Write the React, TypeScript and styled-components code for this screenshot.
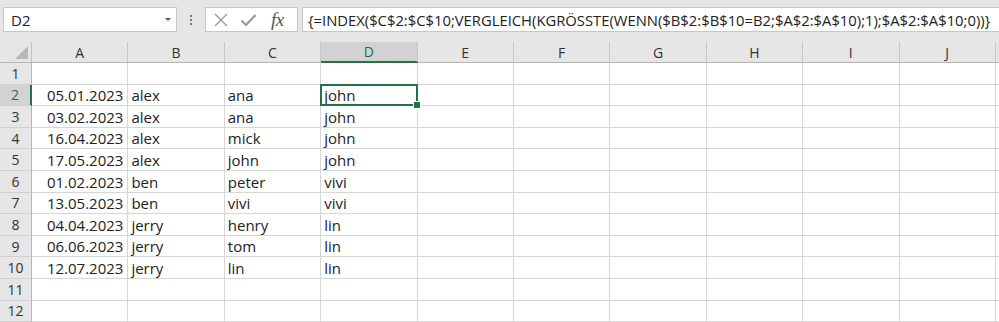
import React from "react";
import styled, { createGlobalStyle, css } from "styled-components";

const GlobalStyle = createGlobalStyle`
  html, body { margin: 0; padding: 0; background: #ffffff; }
  body { font-family: "Open Sans", "Noto Sans", sans-serif; color: #222; overflow: hidden; }
  * { box-sizing: border-box; }
`;

const GREEN = "#217346";

const Page = styled.div`
  width: 999px;
  height: 322px;
  overflow: hidden;
  display: flex;
  flex-direction: column;
`;

const Toolbar = styled.div`
  height: 42px;
  flex: none;
  background: #e6e6e6;
  display: flex;
  align-items: flex-start;
  padding: 7px 0 0 3px;
`;

const NameBox = styled.div`
  width: 174px;
  height: 25px;
  background: #fff;
  border: 1px solid #c6c6c6;
  display: flex;
  align-items: center;
  justify-content: space-between;
  padding: 0 5px 0 7px;
  font-size: 15px;
  color: #222;
`;

const Caret = styled.span`
  width: 0;
  height: 0;
  border-left: 3px solid transparent;
  border-right: 3px solid transparent;
  border-top: 3px solid #555;
`;

const Grip = styled.div`
  width: 28px;
  height: 25px;
  display: flex;
  flex-direction: column;
  align-items: center;
  justify-content: center;
  gap: 2px;
  span {
    width: 2px;
    height: 2px;
    background: #7a7a7a;
  }
`;

const IconBox = styled.div`
  width: 93px;
  height: 25px;
  background: #fff;
  border: 1px solid #c6c6c6;
  display: flex;
  align-items: center;
  padding: 0 0 0 7px;
  gap: 11px;
`;

const Fx = styled.span`
  font-family: "Liberation Serif", "DejaVu Serif", serif;
  font-style: italic;
  font-size: 19px;
  color: #555;
  margin-left: 3px;
  letter-spacing: -0.5px;
`;

const FormulaBox = styled.div`
  flex: 1;
  height: 25px;
  margin-left: 4px;
  background: #fff;
  border: 1px solid #c6c6c6;
  border-right: none;
  display: flex;
  align-items: center;
  padding-left: 5px;
  font-size: 14.8px;
  white-space: nowrap;
  overflow: hidden;
  color: #222;
`;

const Sheet = styled.div`
  display: grid;
  grid-template-columns: 32px repeat(10, 96.4px) 1fr;
  grid-template-rows: 21px repeat(12, 21.6px);
  background: #fff;
`;

const Corner = styled.div`
  background: #e6e6e6;
  border-right: 1px solid #c0c0c0;
  border-bottom: 1px solid #b5b5b5;
  position: relative;
  &::after {
    content: "";
    position: absolute;
    right: 3px;
    bottom: 3px;
    width: 0;
    height: 0;
    border-left: 13px solid transparent;
    border-bottom: 13px solid #b7b7b7;
  }
`;

const ColHead = styled.div<{ $active?: boolean }>`
  background: #e6e6e6;
  border-right: 1px solid #c6c6c6;
  border-bottom: 1px solid #b5b5b5;
  display: flex;
  align-items: center;
  justify-content: center;
  font-size: 14px;
  color: #333;
  ${(p) =>
    p.$active &&
    css`
      background: #d2d2d2;
      color: ${GREEN};
      border-bottom: 2px solid ${GREEN};
    `}
`;

const RowHead = styled.div<{ $active?: boolean }>`
  background: #e6e6e6;
  border-right: 1px solid #b5b5b5;
  border-bottom: 1px solid #d0d0d0;
  display: flex;
  align-items: center;
  justify-content: center;
  font-size: 14px;
  color: #333;
  ${(p) =>
    p.$active &&
    css`
      background: #d2d2d2;
      color: ${GREEN};
      border-right: 2px solid ${GREEN};
    `}
`;

const Cell = styled.div<{ $right?: boolean; $selected?: boolean }>`
  border-right: 1px solid #d6d6d6;
  border-bottom: 1px solid #d6d6d6;
  display: flex;
  align-items: flex-end;
  justify-content: ${(p) => (p.$right ? "flex-end" : "flex-start")};
  padding: 0 ${(p) => (p.$right ? "4px" : "0")} 0 ${(p) => (p.$right ? "0" : "3px")};
  font-size: 15px;
  color: #222;
  white-space: nowrap;
  position: relative;
  ${(p) =>
    p.$selected &&
    css`
      &::after {
        content: "";
        position: absolute;
        left: -1px;
        top: -1px;
        right: -1px;
        bottom: -1px;
        border: 2px solid ${GREEN};
        z-index: 1;
      }
      &::before {
        content: "";
        position: absolute;
        right: -4px;
        bottom: -4px;
        width: 6px;
        height: 6px;
        background: ${GREEN};
        border: 1px solid #fff;
        z-index: 2;
      }
    `}
`;

const columns = ["A", "B", "C", "D", "E", "F", "G", "H", "I", "J"];

const data: string[][] = [
  ["05.01.2023", "alex", "ana", "john"],
  ["03.02.2023", "alex", "ana", "john"],
  ["16.04.2023", "alex", "mick", "john"],
  ["17.05.2023", "alex", "john", "john"],
  ["01.02.2023", "ben", "peter", "vivi"],
  ["13.05.2023", "ben", "vivi", "vivi"],
  ["04.04.2023", "jerry", "henry", "lin"],
  ["06.06.2023", "jerry", "tom", "lin"],
  ["12.07.2023", "jerry", "lin", "lin"],
];

const formula =
  "{=INDEX($C$2:$C$10;VERGLEICH(KGRÖSSTE(WENN($B$2:$B$10=B2;$A$2:$A$10);1);$A$2:$A$10;0))}";

export default function App() {
  const rows = Array.from({ length: 12 }, (_, i) => i + 1);
  return (
    <Page>
      <GlobalStyle />
      <Toolbar>
        <NameBox>
          <span>D2</span>
          <Caret />
        </NameBox>
        <Grip>
          <span />
          <span />
          <span />
        </Grip>
        <IconBox>
          <svg width="16" height="16" viewBox="0 0 16 16">
            <path d="M2 2 L14 14 M14 2 L2 14" stroke="#9a9a9a" strokeWidth="1.4" fill="none" />
          </svg>
          <svg width="17" height="16" viewBox="0 0 17 16">
            <path d="M1.5 8.5 L6 13 L15.5 3" stroke="#9a9a9a" strokeWidth="2.2" fill="none" />
          </svg>
          <Fx>fx</Fx>
        </IconBox>
        <FormulaBox>{formula}</FormulaBox>
      </Toolbar>
      <Sheet>
        <Corner />
        {columns.map((c) => (
          <ColHead key={c} $active={c === "D"}>
            {c}
          </ColHead>
        ))}
        <ColHead />
        {rows.map((r) => {
          const vals = data[r - 2] || [];
          return (
            <React.Fragment key={r}>
              <RowHead $active={r === 2}>{r}</RowHead>
              {columns.map((c, ci) => (
                <Cell key={c} $right={ci === 0} $selected={r === 2 && c === "D"}>
                  {vals[ci] ?? ""}
                </Cell>
              ))}
              <Cell />
            </React.Fragment>
          );
        })}
      </Sheet>
    </Page>
  );
}
